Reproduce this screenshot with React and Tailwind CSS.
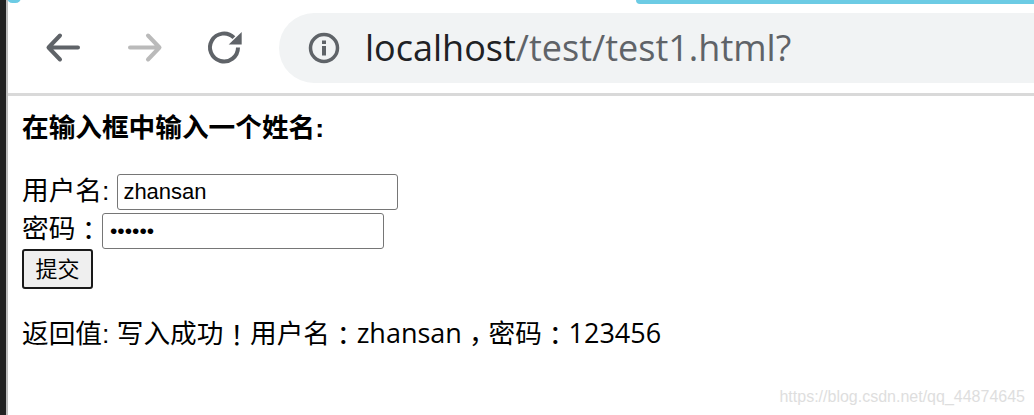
const cjk = '"Liberation Sans", "Noto Sans CJK SC", sans-serif';

// the TC face centres fullwidth punctuation in its cell, as the reference does
function Punct({ children }) {
  return <span className="inline-block translate-y-[2px] font-['Noto_Sans_CJK_TC',sans-serif] leading-none">{children}</span>;
}

function Comma() {
  return <span className="inline-block translate-y-[8px] font-['Noto_Sans_CJK_TC',sans-serif] leading-none">，</span>;
}

function Latin({ children }) {
  return <span className="font-['Open_Sans',sans-serif] text-[27px] leading-none">{children}</span>;
}

function Toolbar() {
  return (
    <div className="flex h-[96px] items-start border-b-[3px] border-[#d9d9d9] pt-[13px]">
      <div className="flex h-[70px] w-[271px] shrink-0 items-center">
        <svg width="271" height="70" viewBox="0 0 271 70" fill="none">
          <path d="M70 34.500H41M52 22.500 40.500 34.500 52 46.500" stroke="#5f6368" strokeWidth="4" strokeLinecap="round" strokeLinejoin="round" />
          <path d="M122 34.500h29M140 22.500l11.500 12L140 46.500" stroke="#bababa" strokeWidth="4" strokeLinecap="round" strokeLinejoin="round" />
          <path d="M230 34.500a14 14 0 1 1-4.100-9.900" stroke="#5f6368" strokeWidth="4" />
          <path d="M233.700 19v12.500h-13z" fill="#5f6368" />
        </svg>
      </div>
      <div className="flex h-[70px] flex-1 items-center rounded-l-[35px] bg-[#f1f3f4] pl-[28px]">
        <svg width="34" height="34" viewBox="0 0 34 34" fill="none" className="shrink-0">
          <circle cx="17" cy="17" r="13.500" stroke="#5f6368" strokeWidth="3.500" />
          <rect x="15" y="15" width="4" height="9.500" fill="#5f6368" />
          <rect x="15" y="9.500" width="4" height="3.500" fill="#5f6368" />
        </svg>
        <div className="ml-[24px] font-['Open_Sans',sans-serif] text-[36px] leading-none whitespace-nowrap">
          <span className="text-[#202124]">localhost</span>
          <span className="text-[#5f6368]">/test/test1.html?</span>
        </div>
      </div>
    </div>
  );
}

function Page() {
  return (
    <div className="pl-[14px] text-[26.67px] leading-[31px] text-black" style={{ fontFamily: cjk }}>
      <h3 className="pt-[17px] font-bold">在输入框中输入一个姓名:</h3>
      <form className="mt-[28px]">
        <div className="flex h-[39px] items-center">
          <span>用户名:</span>
          <input readOnly value="zhansan" className="ml-[8px] h-[36px] w-[281px] rounded-[3px] border border-[#767676] px-[5px] text-[22px] outline-none" />
        </div>
        <div className="mt-[2px] flex h-[36px] items-center">
          <span className="-mt-[4px] shrink-0 whitespace-nowrap">密码<Punct>：</Punct></span>
          <input readOnly type="password" value="123456" className="h-[36px] w-[282px] rounded-[3px] border border-[#767676] px-[7px] text-[21px] outline-none" />
        </div>
        <button type="button" className="block h-[40px] w-[71px] rounded-[3px] border-2 border-[#1a1a1a] bg-[#efefef] text-[22px]">提交</button>
      </form>
      <p className="mt-[30px] whitespace-nowrap">
        返回值: 写入成功<Punct>！</Punct>用户名<Punct>：</Punct><Latin>zhansan</Latin><Comma />密码<Punct>：</Punct><Latin>123456</Latin>
      </p>
    </div>
  );
}

export default function App() {
  return (
    <div className="relative h-[415px] w-[1034px] overflow-hidden bg-white">
      <div className="absolute top-0 left-0 h-full w-[6px] bg-[#222222]" />
      <div className="absolute top-0 left-[6px] h-full w-[2px] bg-[#bdbdbd]" />
      <div className="absolute -top-[8px] left-[7px] h-[11px] w-[14px] rounded-full bg-[#6ccbe4]" />
      <div className="absolute top-0 left-[636px] h-[4px] w-[398px] rounded-bl-[6px] bg-[#6ccbe4]" />
      <div className="ml-[8px]">
        <Toolbar />
        <Page />
      </div>
      <div className="absolute top-[388px] right-[9px] font-['Liberation_Sans',sans-serif] text-[16px] leading-[18px] text-[#dedede]">https://blog.csdn.net/qq_44874645</div>
    </div>
  );
}
